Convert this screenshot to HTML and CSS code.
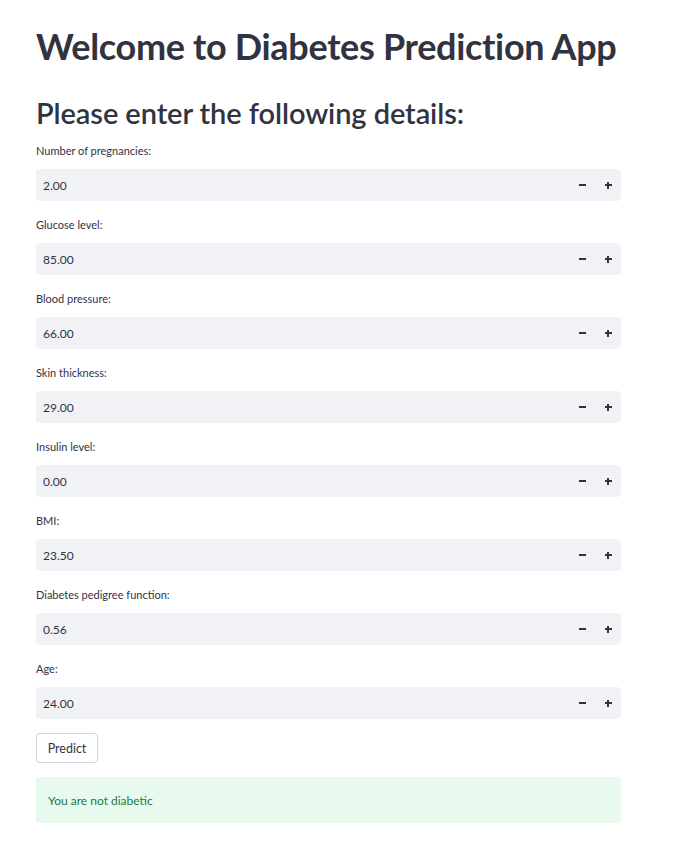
FILE: index.html
```html
<!DOCTYPE html>
<html>
<head>
<meta charset="utf-8">
<link rel="stylesheet" href="styles.css">
</head>
<body>
<main class="page">
  <h1 class="title">Welcome to Diabetes Prediction App</h1>
  <h2 class="subtitle">Please enter the following details:</h2>
  <div class="fields">
    <div class="field">
      <label class="label">Number of pregnancies:</label>
      <div class="input"><span class="value">2.00</span><span class="step minus"></span><span class="step plus"></span></div>
    </div>
    <div class="field">
      <label class="label">Glucose level:</label>
      <div class="input"><span class="value">85.00</span><span class="step minus"></span><span class="step plus"></span></div>
    </div>
    <div class="field">
      <label class="label">Blood pressure:</label>
      <div class="input"><span class="value">66.00</span><span class="step minus"></span><span class="step plus"></span></div>
    </div>
    <div class="field">
      <label class="label">Skin thickness:</label>
      <div class="input"><span class="value">29.00</span><span class="step minus"></span><span class="step plus"></span></div>
    </div>
    <div class="field">
      <label class="label">Insulin level:</label>
      <div class="input"><span class="value">0.00</span><span class="step minus"></span><span class="step plus"></span></div>
    </div>
    <div class="field">
      <label class="label">BMI:</label>
      <div class="input"><span class="value">23.50</span><span class="step minus"></span><span class="step plus"></span></div>
    </div>
    <div class="field">
      <label class="label">Diabetes pedigree function:</label>
      <div class="input"><span class="value">0.56</span><span class="step minus"></span><span class="step plus"></span></div>
    </div>
    <div class="field">
      <label class="label">Age:</label>
      <div class="input"><span class="value">24.00</span><span class="step minus"></span><span class="step plus"></span></div>
    </div>
    <div><button class="btn">Predict</button></div>
    <div class="alert">You are not diabetic</div>
  </div>
</main>
</body>
</html>
```
FILE: styles.css
```css
body {
  margin: 0;
  background: #ffffff;
  color: #31333f;
  font-family: "Lato", "Open Sans", sans-serif;
}
.page {
  width: 585px;
  padding: 0 0 0 36px;
}
.title {
  margin: 0;
  padding-top: 24px;
  font-size: 36px;
  font-weight: 700;
  line-height: 44px;
  letter-spacing: -0.32px;
}
.subtitle {
  margin: 0;
  padding-top: 27px;
  font-size: 29px;
  font-weight: 600;
  line-height: 36px;
  letter-spacing: -0.08px;
}
.fields {
  display: flex;
  flex-direction: column;
  gap: 14px;
  padding-top: 10px;
}
.field {
  display: flex;
  flex-direction: column;
}
.label {
  font-size: 11px;
  line-height: 20px;
  height: 20px;
  margin-bottom: 8px;
}
.input {
  display: flex;
  align-items: center;
  height: 32px;
  background: #f0f2f6;
  border-radius: 4px;
}
.value {
  flex: 1;
  padding-left: 7px;
  font-size: 12px;
}
.step {
  width: 26px;
  height: 32px;
  position: relative;
}
.step::before, .step::after {
  content: "";
  position: absolute;
  background: #31333f;
  left: 50%;
  top: 50%;
}
.step::before {
  width: 7px;
  height: 2px;
  margin: -1px 0 0 -3.5px;
}
.minus::after { display: none; }
.plus::after {
  width: 2px;
  height: 7px;
  margin: -3.5px 0 0 -1px;
}
.btn {
  font-family: inherit;
  font-size: 12.5px;
  color: #31333f;
  background: #ffffff;
  border: 1px solid #d3d4d9;
  border-radius: 4px;
  width: 62px;
  height: 30px;
  padding: 0;
}
.alert {
  height: 46px;
  box-sizing: border-box;
  padding: 0 12px;
  display: flex;
  align-items: center;
  background: #e8f9ee;
  color: #1c7a3f;
  font-size: 12px;
  border-radius: 4px;
}
```
